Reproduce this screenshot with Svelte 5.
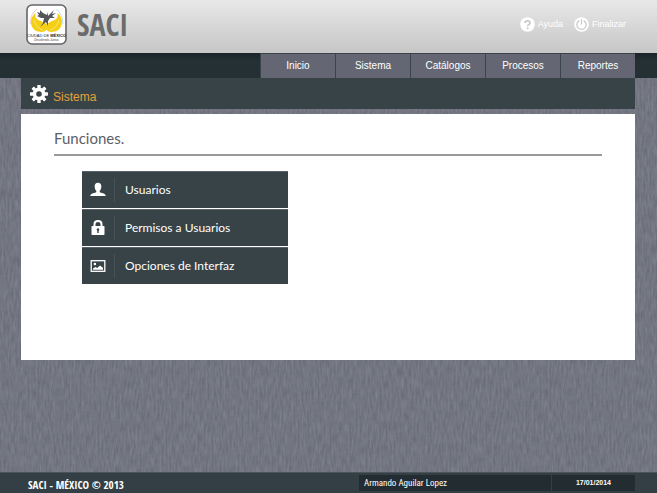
<script>
  const sections = ['Inicio', 'Sistema', 'Catálogos', 'Procesos', 'Reportes'];
  const options = [
    { icon: 'user', label: 'Usuarios' },
    { icon: 'lock', label: 'Permisos a Usuarios' },
    { icon: 'image', label: 'Opciones de Interfaz' }
  ];
  const teeth = [0, 45, 90, 135, 180, 225, 270, 315];
</script>

<div class="page">
  <svg class="linen" aria-hidden="true">
    <filter id="warp" x="0" y="0" width="100%" height="100%">
      <feTurbulence type="fractalNoise" baseFrequency="0.5 0.09" numOctaves="2" seed="4" />
      <feColorMatrix values="0 0 0 0 0.75  0 0 0 0 0.75  0 0 0 0 0.8  0.3 0 0 0 -0.08" />
    </filter>
    <filter id="weft" x="0" y="0" width="100%" height="100%">
      <feTurbulence type="fractalNoise" baseFrequency="0.09 0.5" numOctaves="2" seed="9" />
      <feColorMatrix values="0 0 0 0 0.2  0 0 0 0 0.22  0 0 0 0 0.28  0.5 0 0 0 -0.18" />
    </filter>
    <rect width="100%" height="100%" filter="url(#warp)" />
    <rect width="100%" height="100%" filter="url(#weft)" />
  </svg>

  <header>
    <div class="brand">
      <svg class="crest" viewBox="0 0 41 41" role="img" aria-label="Ciudad de México, Decidiendo Juntos">
        <rect x="1" y="1" width="39" height="39" rx="5" fill="#fff" stroke="#65666b" stroke-width="1.6" />
        <path d="M4 20Q4 10 11 5" fill="none" stroke="#f4b9bd" stroke-width=".8" />
        <path d="M30 5Q37 10 37 20" fill="none" stroke="#a9d9ee" stroke-width=".8" />
        <path d="M10 9C3 13 3 25 12 27.500C16 28.500 19 28 20.500 25.500C22 28 25 28.500 29 27.500C38 25 38 13 31 9C33 13 30 16 26 17L20.500 20L15 17C11 16 8 13 10 9Z" fill="#f5cf16" />
        <path d="M8 16Q10 24 17 26M33 16Q31 24 24 26" fill="none" stroke="#fff1a0" stroke-width=".6" />
        <path d="M21 11L17 9L14 6L14 9L11 8L13 11L11 12L15 14L18 14L17 19L14 23L20 18L22 22L22 17L24 14L29 14L26 12L30 9L26 10L28 6L24 10L22 12L22 8Z" fill="#55565a" />
        <text x="20.5" y="33" text-anchor="middle" class="crest-name">CIUDAD DE <tspan font-weight="700">MÉXICO</tspan></text>
        <text x="20.5" y="37" text-anchor="middle" class="crest-motto">Decidiendo Juntos</text>
      </svg>
      <span class="name">SACI</span>
    </div>
    <div class="tools">
      <a href="#ayuda">
        <svg viewBox="0 0 15 15" aria-hidden="true">
          <circle cx="7.5" cy="7.5" r="7.3" fill="#fff" />
          <path d="M5 6Q5 3.8 7.5 3.8Q10 3.8 10 5.9Q10 7.1 8.5 7.7Q7.6 8.1 7.6 9.2" fill="none" stroke="#c9c9c9" stroke-width="1.7" />
          <circle cx="7.6" cy="11.3" r="1" fill="#c9c9c9" />
        </svg>Ayuda</a>
      <a href="#finalizar">
        <svg viewBox="0 0 15 15" aria-hidden="true">
          <circle cx="7.5" cy="7.5" r="7.3" fill="#fff" />
          <path d="M5.3 3.6A4.7 4.7 0 1 0 9.7 3.6M7.5 2.2V7.6" fill="none" stroke="#c9c9c9" stroke-width="1.2" />
        </svg>Finalizar</a>
    </div>
  </header>

  <nav>
    {#each sections as section}
      <a href={'#' + section}>{section}</a>
    {/each}
  </nav>

  <main>
    <div class="title">
      <svg viewBox="0 0 18 18" aria-hidden="true">
        {#each teeth as angle}
          <rect x="7.3" y="0" width="3.4" height="4.5" rx=".6" fill="#fff" transform={`rotate(${angle} 9 9)`} />
        {/each}
        <circle cx="9" cy="9" r="4.6" fill="none" stroke="#fff" stroke-width="3.6" />
      </svg>
      <h1>Sistema</h1>
    </div>
    <section>
      <h2>Funciones.</h2>
      <ul>
        {#each options as option}
          <li>
            <button type="button">
              <span class="icon">
                <svg viewBox="0 0 16 16" aria-hidden="true">
                  {#if option.icon === 'user'}
                    <path d="M8 .8C10.500 .8 11.600 2.600 11.300 5C11.100 7 10.500 8.100 9.700 8.800V10C10.700 11.200 15.700 11 15.700 14H.3C.3 11 5.300 11.200 6.300 10V8.800C5.500 8.100 4.900 7 4.700 5C4.400 2.600 5.500 .8 8 .8Z" fill="#fff" />
                  {:else if option.icon === 'lock'}
                    <path d="M4.5 7V4.2Q4.500 1 8 1Q11.500 1 11.500 4.200V7" fill="none" stroke="#fff" stroke-width="2" />
                    <rect x="1.5" y="6" width="13" height="9" rx=".8" fill="#fff" />
                    <path d="M8 8.3A1.3 1.3 0 0 1 8.7 10.7V13H7.3V10.7A1.3 1.3 0 0 1 8 8.3Z" fill="#384347" />
                  {:else}
                    <rect x="1.2" y="2.7" width="13.6" height="10.6" fill="none" stroke="#fff" stroke-width="1.3" />
                    <circle cx="4.9" cy="6" r="1.3" fill="#fff" />
                    <path d="M3 11.7V10.5L5.5 9L7.2 10L10 7.5L13 9.7V11.7Z" fill="#fff" />
                  {/if}
                </svg>
              </span>
              <span class="label">{option.label}</span>
            </button>
          </li>
        {/each}
      </ul>
    </section>
  </main>

  <footer>
    <span class="copy">SACI - MÉXICO © 2013</span>
    <span class="who">Armando Aguilar Lopez</span>
    <time datetime="2014-01-17">17/01/2014</time>
  </footer>
</div>

<style>
  :global(body) { margin: 0; }
  .page {
    position: relative;
    isolation: isolate;
    display: flex;
    flex-direction: column;
    min-height: 100vh;
    background: #6a6d78;
    font-family: "Liberation Sans", Arial, sans-serif;
    color: #fff;
  }
  .linen { position: absolute; inset: 0; z-index: -1; width: 100%; height: 100%; }
  a { color: inherit; text-decoration: none; }
  header {
    display: flex;
    justify-content: space-between;
    box-sizing: border-box;
    height: 53px;
    padding: 4px 31px 0 26px;
    background: linear-gradient(#e8e8e8, #c6c6c6);
  }
  .brand { display: flex; gap: 10px; }
  .crest { width: 41px; height: 41px; }
  .crest-name { font-size: 4px; fill: #222; }
  .crest-motto { font-size: 3px; font-style: italic; fill: #444; }
  .name {
    font: 700 30px/42px "Open Sans Condensed", "Liberation Sans Narrow", sans-serif;
    color: #6b6b6b;
  }
  .tools { display: flex; gap: 11px; height: 40px; align-items: center; font-size: 9px; }
  .tools a { display: flex; align-items: center; gap: 3px; }
  .tools svg { width: 15px; height: 15px; }
  nav {
    display: flex;
    justify-content: flex-end;
    height: 25px;
    padding-right: 22px;
    background: linear-gradient(#1b2529, #243034 8px);
  }
  nav a {
    box-sizing: border-box;
    width: 75px;
    border: solid #3a4449;
    border-width: 1px 0 0 1px;
    background: #646773;
    font-size: 10px;
    line-height: 24px;
    text-align: center;
  }
  main { flex: 1; margin: 0 22px 24px 21px; }
  .title {
    display: flex;
    align-items: center;
    gap: 5px;
    height: 31px;
    padding-left: 9px;
    background: #384347;
  }
  .title svg { width: 18px; height: 18px; }
  h1 { margin: 6px 0 0; font-size: 12px; font-weight: 400; line-height: 16px; color: #e4a13c; }
  section { box-sizing: border-box; min-height: 246px; margin-top: 5px; padding: 12px 33px; background: #fff; }
  h2 {
    margin: 0;
    padding-bottom: 3px;
    border-bottom: 2px solid #999a99;
    font: 400 15px/25px Lato, "Open Sans", sans-serif;
    color: #5c6069;
  }
  ul { display: flex; flex-direction: column; gap: 1px; width: 206px; margin: 15px 0 0 28px; padding: 0; list-style: none; }
  button {
    display: flex;
    align-items: center;
    width: 100%;
    height: 37px;
    padding: 0;
    border: 0;
    border-top: 1px solid #59636a;
    background: #384347;
    color: #fff;
    font: 400 12px/18px Lato, "Open Sans", sans-serif;
  }
  .icon { display: flex; align-items: center; justify-content: center; width: 32px; height: 24px; border-right: 1px solid #465257; }
  .icon svg { width: 16px; height: 16px; }
  .label { padding-left: 10px; }
  footer {
    display: flex;
    box-sizing: border-box;
    height: 21px;
    padding: 2px 22px 2px 28px;
    border-top: 1px solid #4b545b;
    background: #343f45;
    line-height: 16px;
  }
  .copy { flex: 1; font: 700 11px/19px "Open Sans Condensed", "Liberation Sans Narrow", sans-serif; }
  .who { box-sizing: border-box; width: 192px; padding-left: 5px; background: #232d31; font: 400 9px/16px "Roboto Condensed", "Open Sans Condensed", sans-serif; }
  time { width: 83px; margin-left: 1px; background: #232d31; font-size: 7px; font-weight: 700; text-align: center; }
</style>
